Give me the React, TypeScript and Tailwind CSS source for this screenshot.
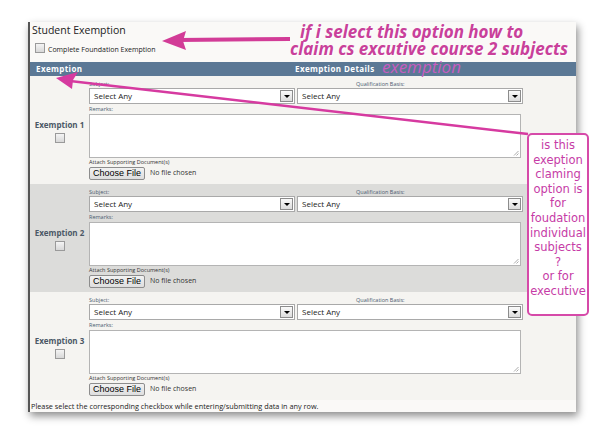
import React from 'react';

const ui = { fontFamily: '"Open Sans", "DejaVu Sans", sans-serif' };
const note = { fontFamily: '"DejaVu Sans", "Open Sans", sans-serif' };

const Checkbox: React.FC = () => (
  <div className="w-[10px] h-[10px] border border-[#9a9a9a] bg-gradient-to-b from-[#f4f4f4] to-[#d8d8d8]" />
);

const Select: React.FC<{ width: string }> = ({ width }) => (
  <div className={`${width} h-[16px] flex items-center border border-[#a9a9a9] bg-white`}>
    <span className="flex-1 pl-[4px] text-[8px] text-[#222]">Select Any</span>
    <div className="w-[13px] h-[12px] mr-[1px] flex items-center justify-center border border-[#8c8c8c] bg-gradient-to-b from-[#fafafa] to-[#dcdcdc]">
      <div className="w-0 h-0 border-l-[3px] border-r-[3px] border-t-[3px] border-l-transparent border-r-transparent border-t-black" />
    </div>
  </div>
);

const Row: React.FC<{ n: number; shaded?: boolean }> = ({ n, shaded }) => (
  <div className={`flex h-[108px] ${shaded ? 'bg-[#dcdcda]' : 'bg-[#f5f4f1]'}`}>
    <div className="w-[59px] flex flex-col items-center justify-center gap-[2px] pt-[1px]">
      <span className="text-[8px] font-bold text-[#4b5866]">Exemption {n}</span>
      <Checkbox />
    </div>
    <div className="flex-1 flex flex-col pt-[3px]">
      <div className="flex h-[9px] items-end text-[5.5px] text-[#4a5a70]">
        <span className="w-[267px]">Subject:</span>
        <span>Qualification Basis:</span>
      </div>
      <div className="flex gap-[2px]">
        <Select width="w-[206px]" />
        <Select width="w-[226px]" />
      </div>
      <div className="h-[10px] flex items-center text-[5.5px] text-[#4a5a70]">Remarks:</div>
      <div className="relative w-[432px] h-[44px] border border-[#b4b4b4] bg-white">
        <svg className="absolute right-[1px] bottom-[1px]" width="6" height="6" viewBox="0 0 6 6">
          <path d="M5.5 1 L1 5.5 M5.5 3.5 L3.5 5.5" stroke="#888" strokeWidth="0.7" />
        </svg>
      </div>
      <div className="h-[9px] flex items-center text-[5.5px] text-[#333]">Attach Supporting Document(s)</div>
      <div className="flex items-center gap-[5px]">
        <div
          className="h-[13px] px-[3px] flex items-center border border-[#8d8d8d] rounded-[2px] bg-gradient-to-b from-[#f2f2f2] to-[#dedede] text-[9px] text-black"
          style={{ fontFamily: '"Liberation Sans", Arial, sans-serif' }}
        >
          Choose File
        </div>
        <span className="text-[7px] text-[#333]">No file chosen</span>
      </div>
    </div>
  </div>
);

export default function App() {
  return (
    <div className="relative w-[600px] h-[436px] bg-white overflow-hidden" style={ui}>
      <div className="ml-[28px] mt-[22px] w-[548px] h-[390px] flex flex-col bg-[#faf9f7] border-l-[2px] border-[#555] shadow-[2px_4px_8px_rgba(0,0,0,0.45)]">
        <div className="h-[40px] pl-[2px] flex flex-col">
          <span className="text-[10.5px] leading-[16px] text-[#222]">Student Exemption</span>
          <div className="flex items-center gap-[3px] ml-[3px] mt-[2px]">
            <Checkbox />
            <span className="text-[7px] text-[#222] mt-[5px]">Complete Foundation Exemption</span>
          </div>
        </div>
        <div className="h-[14px] flex items-center bg-[#5b7895] text-white text-[8px] font-bold tracking-[0.4px]">
          <span className="w-[265px] pl-[6px]">Exemption</span>
          <span>Exemption Details</span>
        </div>
        <Row n={1} />
        <Row n={2} shaded />
        <Row n={3} />
        <div className="flex-1 flex items-center text-[7.3px] text-[#222] pl-[1px]">
          Please select the corresponding checkbox while entering/submitting data in any row.
        </div>
      </div>

      {/* annotations */}
      <svg className="absolute inset-0" width="600" height="436" viewBox="0 0 600 436">
        <line x1="290" y1="39" x2="178" y2="40" stroke="#d23c97" strokeWidth="4" />
        <polygon points="162,41 186,31 183,41 186,50" fill="#d23c97" />
        <line x1="528" y1="134" x2="70" y2="81" stroke="#d63aa0" strokeWidth="2.5" />
        <polygon points="56,78 78,72 73,80 72,89" fill="#d63aa0" />
      </svg>
      <div className="absolute left-[290px] top-[23px] whitespace-nowrap text-[17px] leading-[17px] font-bold italic text-[#c9409a] [text-shadow:1px_1px_1px_rgba(255,255,255,0.9)]">
        <span className="ml-[10px]">if i select this option how to</span>
        <br />
        claim cs excutive course 2 subjects
      </div>
      <div className="absolute left-[382px] top-[59px] whitespace-nowrap text-[17px] leading-[16px] italic text-[#c85cc0]">
        exemption
      </div>
      <div
        className="absolute left-[527px] top-[133px] w-[62px] h-[183px] rounded-[5px] border-[2px] border-[#d64aa9] bg-white text-center text-[11.5px] leading-[14.6px] text-[#c63ba6] pt-[3px]"
        style={note}
      >
        is this<br />exeption<br />claming<br />option is<br />for<br />foudation<br />individual<br />subjects<br />?<br />or for<br />executive
      </div>
    </div>
  );
}
